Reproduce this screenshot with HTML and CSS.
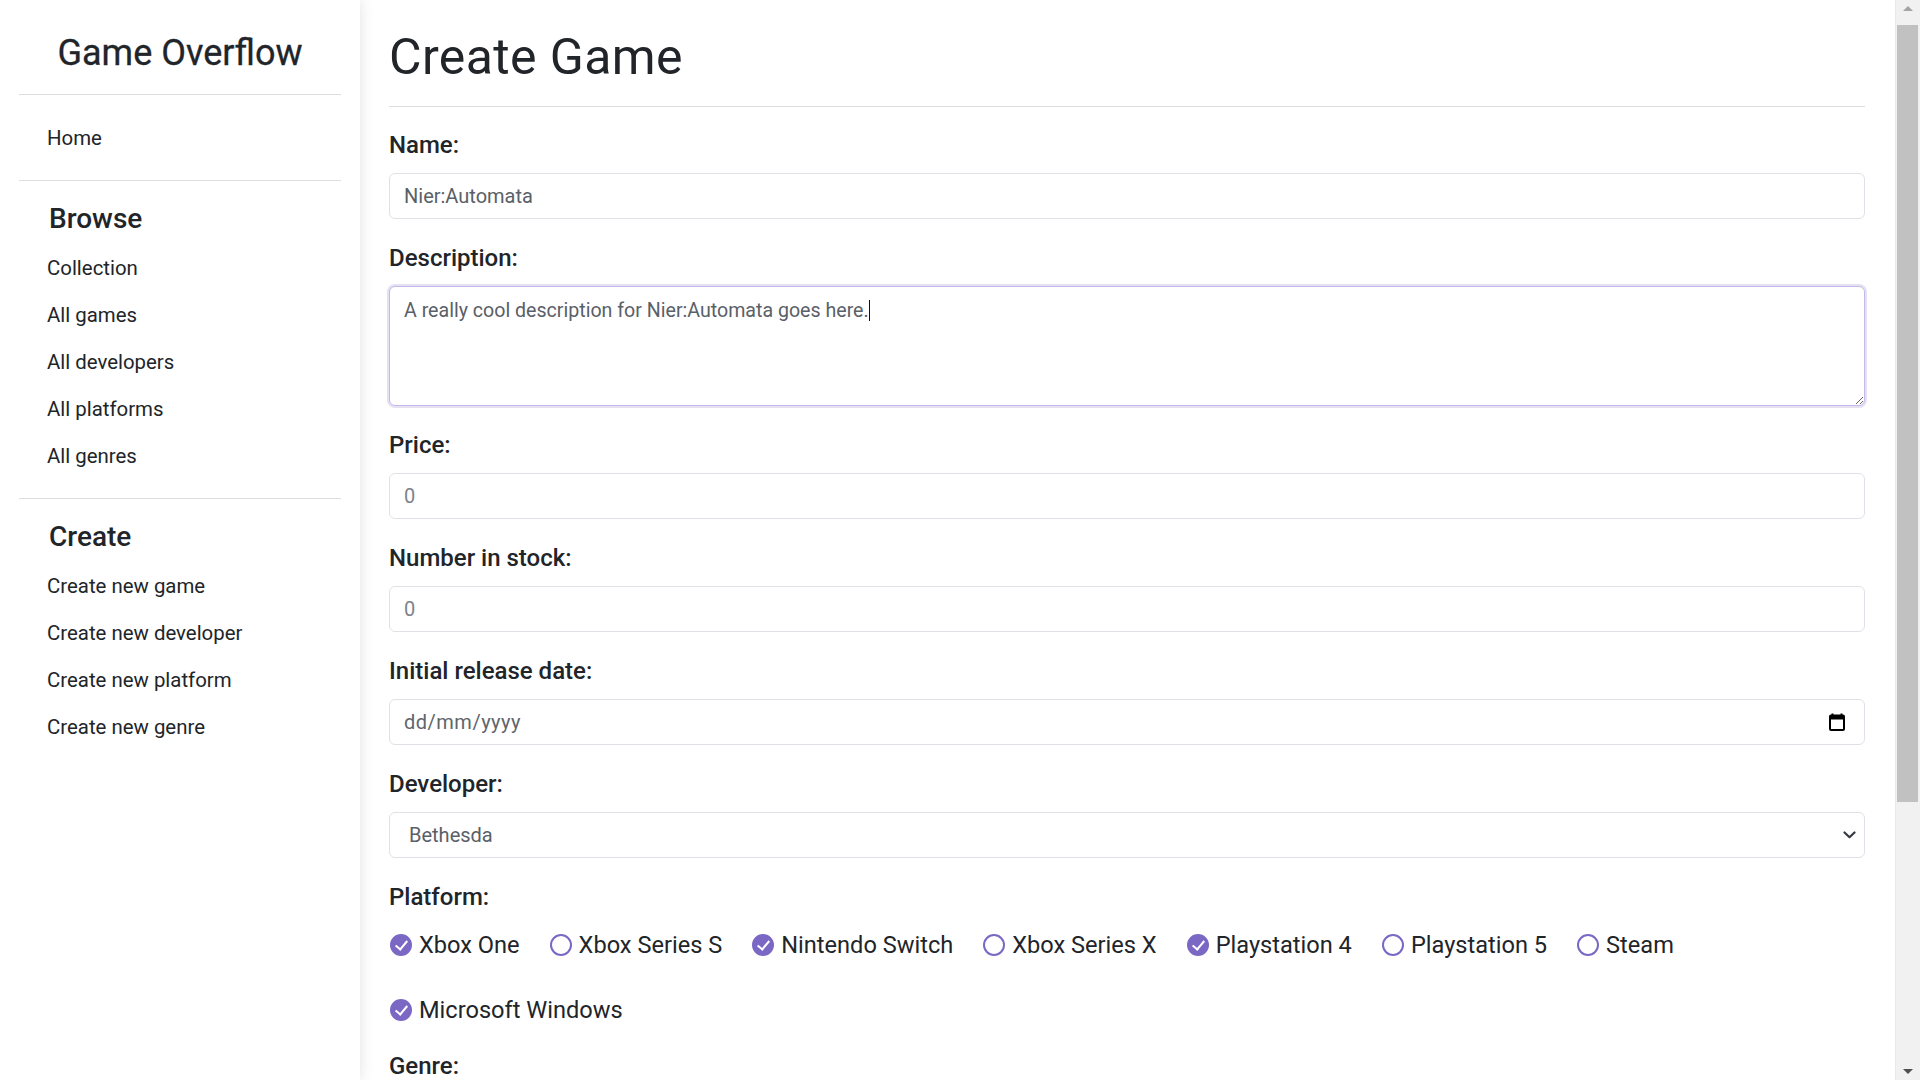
FILE: index.html
```html
<!DOCTYPE html>
<html lang="en">
<head>
<meta charset="utf-8">
<title>Create Game - Game Overflow</title>
<link rel="stylesheet" href="styles.css">
</head>
<body>
<div class="layout">
  <aside class="sidebar">
    <div class="brand">Game Overflow</div>
    <hr>
    <ul class="nav">
      <li><a class="nav-link" href="#">Home</a></li>
    </ul>
    <hr>
    <div class="nav-heading">Browse</div>
    <ul class="nav">
      <li><a class="nav-link" href="#">Collection</a></li>
      <li><a class="nav-link" href="#">All games</a></li>
      <li><a class="nav-link" href="#">All developers</a></li>
      <li><a class="nav-link" href="#">All platforms</a></li>
      <li><a class="nav-link" href="#">All genres</a></li>
    </ul>
    <hr>
    <div class="nav-heading">Create</div>
    <ul class="nav">
      <li><a class="nav-link" href="#">Create new game</a></li>
      <li><a class="nav-link" href="#">Create new developer</a></li>
      <li><a class="nav-link" href="#">Create new platform</a></li>
      <li><a class="nav-link" href="#">Create new genre</a></li>
    </ul>
  </aside>

  <main class="main">
    <h1 class="page-title">Create Game</h1>
    <hr class="title-rule">
    <form class="form">
      <div class="group">
        <label class="label">Name:</label>
        <div class="field">Nier:Automata</div>
      </div>
      <div class="group">
        <label class="label">Description:</label>
        <div class="field textarea focused">A really cool description for Nier:Automata goes here.<span class="caret"></span></div>
      </div>
      <div class="group">
        <label class="label">Price:</label>
        <div class="field placeholder">0</div>
      </div>
      <div class="group">
        <label class="label">Number in stock:</label>
        <div class="field placeholder">0</div>
      </div>
      <div class="group">
        <label class="label">Initial release date:</label>
        <div class="field date">
          <span class="date-text">dd/mm/yyyy</span>
          <svg class="cal-icon" width="16" height="18" viewBox="0 0 16 18">
            <rect x="2.5" y="0.5" width="2" height="3" fill="#000"/>
            <rect x="11.5" y="0.5" width="2" height="3" fill="#000"/>
            <rect x="1" y="2.5" width="14" height="14.5" rx="1" fill="none" stroke="#000" stroke-width="2"/>
            <rect x="1" y="2.5" width="14" height="4" fill="#000"/>
          </svg>
        </div>
      </div>
      <div class="group">
        <label class="label">Developer:</label>
        <div class="field select">
          <span class="select-text">Bethesda</span>
          <svg class="chevron" width="13" height="8" viewBox="0 0 13 8">
            <path d="M1.5 1.5 L6.5 6.2 L11.5 1.5" fill="none" stroke="#343a40" stroke-width="2.2" stroke-linecap="round" stroke-linejoin="round"/>
          </svg>
        </div>
      </div>
      <div class="group group-checks">
        <label class="label">Platform:</label>
        <div class="checks">
          <span class="check"><span class="box on"></span>Xbox One</span>
          <span class="check"><span class="box"></span>Xbox Series S</span>
          <span class="check"><span class="box on"></span>Nintendo Switch</span>
          <span class="check"><span class="box"></span>Xbox Series X</span>
          <span class="check"><span class="box on"></span>Playstation 4</span>
          <span class="check"><span class="box"></span>Playstation 5</span>
          <span class="check"><span class="box"></span>Steam</span>
          <span class="check"><span class="box on"></span>Microsoft Windows</span>
        </div>
      </div>
      <div class="group group-checks">
        <label class="label">Genre:</label>
        <div class="checks">
          <span class="check"><span class="box on"></span>Action</span>
          <span class="check"><span class="box"></span>Adventure</span>
          <span class="check"><span class="box on"></span>Role-playing</span>
          <span class="check"><span class="box"></span>Shooter</span>
          <span class="check"><span class="box"></span>Strategy</span>
          <span class="check"><span class="box"></span>Simulation</span>
          <span class="check"><span class="box"></span>Sports</span>
          <span class="check"><span class="box"></span>Puzzle</span>
        </div>
      </div>
      <button class="submit" type="button">Submit</button>
    </form>
  </main>

  <div class="scrollbar" aria-hidden="true">
    <span class="sb-btn"><span class="sb-arrow up"></span></span>
    <span class="sb-track"><span class="sb-thumb"></span></span>
    <span class="sb-btn"><span class="sb-arrow down"></span></span>
  </div>
</div>
</body>
</html>
```
FILE: styles.css
```css
html {
  scrollbar-width: none;
}

body {
  margin: 0;
  font-family: Roboto, "Liberation Sans", sans-serif;
  color: #212529;
  background: #fff;
}

.layout {
  display: flex;
  min-height: 1437px;
  align-items: flex-start;
}

/* Sidebar */
.sidebar {
  width: 360px;
  flex-shrink: 0;
  height: 100vh;
  position: sticky;
  top: 0;
  box-sizing: border-box;
  padding: 32px 19px 0;
  background: #fff;
  box-shadow: 0 0 14px rgba(0, 0, 0, 0.12);
  z-index: 1;
}

.brand {
  font-size: 36px;
  font-weight: 400;
  line-height: 43px;
  text-align: center;
  color: #212529;
  margin: 0 0 19px;
  -webkit-text-stroke: 0.3px #212529;
}

.sidebar hr {
  border: 0;
  border-top: 1px solid #dedede;
  margin: 0;
}

.nav {
  list-style: none;
  margin: 20px 0 18px;
  padding: 0;
}

.nav-heading + .nav {
  margin-top: 0;
}

.nav-link {
  display: block;
  padding: 8px 28px;
  line-height: 31px;
  font-size: 20.4px;
  color: #212529;
  text-decoration: none;
}

.nav-heading {
  font-size: 28px;
  font-weight: 500;
  line-height: 34px;
  margin: 21px 0 9px;
  padding-left: 30px;
  color: #212529;
}

/* Main */
.main {
  flex: 1;
  min-width: 0;
  padding: 30px 30px 40px 29px;
}

.page-title {
  font-size: 50px;
  font-weight: 400;
  line-height: 54px;
  letter-spacing: 0.4px;
  margin: 0 0 22px;
  color: #212529;
}

.title-rule {
  border: 0;
  border-top: 1px solid #dedede;
  margin: 0 0 23px;
}

.group {
  margin-bottom: 24px;
}

.group-checks {
  margin-bottom: 21px;
}

.label {
  display: block;
  font-size: 24px;
  font-weight: 500;
  line-height: 30px;
  margin-bottom: 13px;
  color: #212529;
}

.field {
  height: 46px;
  box-sizing: border-box;
  border: 1px solid #dee2e6;
  border-radius: 6px;
  padding: 0 14px;
  font-size: 20px;
  color: #5a6067;
  display: flex;
  align-items: center;
  background: #fff;
}

.placeholder {
  color: #7d8389;
}

.textarea {
  display: block;
  height: 120px;
  padding-top: 12px;
  line-height: 24px;
  font-size: 19.6px;
  resize: vertical;
  overflow: auto;
}

.focused {
  border-color: #c4b9ea;
  box-shadow: 0 0 0 2px rgba(123, 104, 196, 0.2);
}

.caret {
  display: inline-block;
  width: 1.5px;
  height: 21px;
  background: #111;
  vertical-align: -4px;
}

.date {
  justify-content: space-between;
  padding-right: 19px;
}

.date-text {
  color: #5f656b;
  letter-spacing: 0.5px;
}

.select {
  justify-content: space-between;
  padding: 0 8px 0 19px;
}

.chevron {
  display: block;
}

/* Checkboxes */
.checks {
  display: flex;
  flex-wrap: wrap;
  column-gap: 29px;
  row-gap: 25px;
}

.check {
  display: flex;
  align-items: center;
  gap: 7px;
  height: 40px;
  font-size: 23.6px;
  color: #212529;
}

.box {
  position: relative;
  width: 22px;
  height: 22px;
  box-sizing: border-box;
  margin-left: 1px;
  border-radius: 50%;
  border: 2px solid #7b68c4;
  background: #fff;
  flex-shrink: 0;
}

.box.on {
  background: #7b68c4;
}

.box.on::after {
  content: "";
  position: absolute;
  left: 6px;
  top: 2px;
  width: 5px;
  height: 10px;
  border-right: 2.5px solid #fff;
  border-bottom: 2.5px solid #fff;
  transform: rotate(40deg);
}

.submit {
  margin-top: 6px;
  font-family: inherit;
  font-size: 20px;
  color: #fff;
  background: #7b68c4;
  border: 0;
  border-radius: 6px;
  padding: 10px 22px;
}

/* Scrollbar column */
.scrollbar {
  width: 25px;
  flex-shrink: 0;
  height: 100vh;
  position: sticky;
  top: 0;
  display: flex;
  flex-direction: column;
  background: #f1f1f1;
  border-left: 1px solid #e8e8e8;
  box-sizing: border-box;
}

.sb-btn {
  height: 25px;
  flex-shrink: 0;
  display: flex;
  align-items: center;
  justify-content: center;
}

.sb-track {
  flex: 1;
  display: flex;
  flex-direction: column;
  padding: 0 2px 0 1px;
}

.sb-thumb {
  display: block;
  height: 777px;
  background: #c1c1c1;
}

.sb-arrow {
  width: 0;
  height: 0;
  border-left: 5px solid transparent;
  border-right: 5px solid transparent;
}

.sb-arrow.up {
  border-bottom: 5px solid #a3a3a3;
  margin-bottom: 8px;
}

.sb-arrow.down {
  border-top: 5px solid #505050;
  margin-top: 8px;
}
```
